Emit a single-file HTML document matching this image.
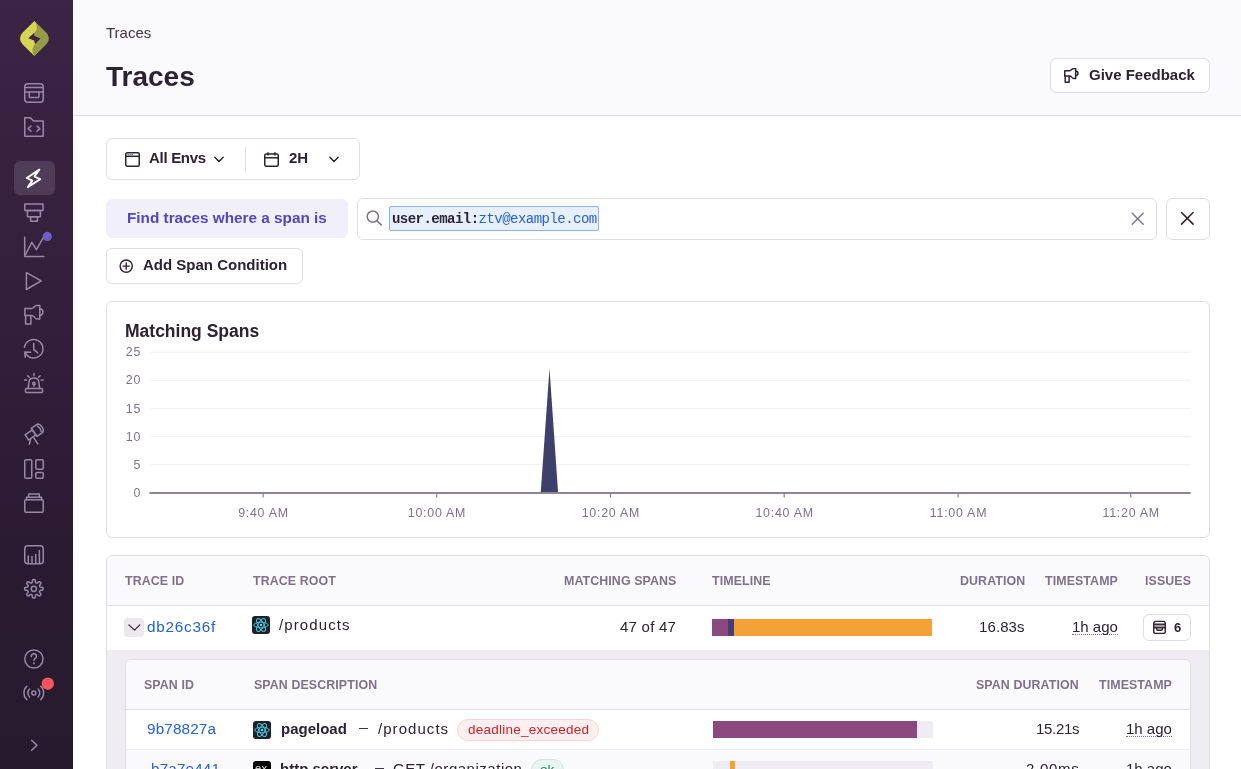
<!DOCTYPE html>
<html><head><meta charset="utf-8">
<style>
*{box-sizing:border-box;margin:0;padding:0}
html,body{width:1241px;height:769px;overflow:hidden;background:#fff;font-family:"Liberation Sans",sans-serif;color:#2b2233}
.abs{position:absolute}
#sb{position:absolute;left:0;top:0;width:73px;height:769px;background:linear-gradient(180deg,#3c2444 0%,#301d38 52%,#291a30 78%,#271a2e 100%)}
#sb svg.ic{position:absolute;left:24px;width:20px;height:20px;fill:none;stroke:#9e8eb0;stroke-width:1.5;stroke-linecap:round;stroke-linejoin:round}
#hdr{position:absolute;left:73px;top:0;width:1168px;height:116px;background:#faf9fb;border-bottom:1px solid #e0dce5}
.t{position:absolute;white-space:nowrap;line-height:1;will-change:transform}
.box{position:absolute;border:1px solid #e0dce5;border-radius:6px;background:#fff}
.th{position:absolute;will-change:transform;white-space:nowrap;line-height:1;font-weight:bold;font-size:12.4px;color:#80708f;letter-spacing:0.1px}
</style></head><body>
<div id="sb">
<svg width="73" height="769" viewBox="0 0 73 769" style="position:absolute;left:0;top:0">
<defs>
<linearGradient id="lg1" x1="0" y1="0" x2="1" y2="0"></linearGradient>
</defs>
<!-- logo -->
<g>
<path d="M34.5 20.9 L22.35 33.05 A7.7 7.7 0 0 0 22.35 43.95 L34.5 56.1 L46.65 43.95 A7.7 7.7 0 0 0 46.65 33.05 Z" fill="#969b47"/>
<path d="M34.5 20.9 L22.35 33.05 A7.7 7.7 0 0 0 22.35 43.95 L34.5 56.1 Q31.8 52 32.5 49 Q33.5 46 35 44 L34.2 32.9 Q37.5 29.5 36.8 26.5 Q36.2 23.5 34.5 20.9 Z" fill="#d7d453"/>
<path d="M34.16 32.86 L34.5 36.1 L40.6 38.6 L35.0 44.0 L34.2 40.6 L28.3 38.2 Z" fill="#3c2444"/>
</g>
<rect x="14" y="161" width="41" height="34" rx="6" fill="#ffffff" fill-opacity="0.12"/>
<g fill="none" stroke="#9888aa" stroke-width="1.5" stroke-linecap="round" stroke-linejoin="round">
<!-- issues -->
<rect x="24.75" y="83.75" width="18.5" height="18.5" rx="3"/>
<line x1="24.75" y1="87.6" x2="43.25" y2="87.6"/>
<line x1="24.75" y1="92.1" x2="43.25" y2="92.1"/>
<path d="M29.2 92.1 V96.4 Q29.2 97.6 30.4 97.6 H37.8 Q39 97.6 39 96.4 V92.1"/>
<!-- folder code -->
<path d="M24.75 136.25 V117.75 H30.5 L33.5 121 H43.25 V136.25 Z"/>
<path d="M31 126 L28.2 128.6 L31 131.2"/>
<path d="M37 126 L39.8 128.6 L37 131.2"/>
<!-- explore stack -->
<rect x="24.8" y="204" width="18.2" height="6.4"/>
<rect x="27.4" y="210.4" width="13" height="6.4"/>
<rect x="30.6" y="216.8" width="6.8" height="4.5"/>
<!-- chart -->
<path d="M24.7 237.3 V256.4 H43.7"/>
<path d="M25.5 254.6 L31.8 242.3 L36.4 249.6 L43.2 237.8"/>
<!-- play -->
<path d="M26.4 272.6 L41.2 280.9 L26.4 289.5 Z"/>
<!-- megaphone -->
<path d="M24.9 308.4 H31.6 Q33 308.4 34.3 306.9 Q35.3 305.5 36.8 305.5 H39.8 V318.9 H36.8 Q35.3 318.9 34.3 317 Q33 315.6 31.6 315.6 H24.9 Z"/>
<path d="M39.8 308.9 A3.2 3.2 0 0 1 39.8 315.3"/>
<path d="M25.6 315.6 V324.1 H30.9 V315.6"/>
<!-- history -->
<path d="M25.2 352.6 A9.3 9.3 0 1 0 24.5 347.2"/>
<path d="M30.6 352.3 L24.9 352.1 L25.1 357.4"/>
<path d="M33.7 343.6 V349.4 L37.8 352.8"/>
<!-- alarm -->
<rect x="25.5" y="388.6" width="17" height="3.9" rx="0.9"/>
<path d="M28.1 388.6 L29 381.8 Q29.5 378 33.9 378 Q38.3 378 38.8 381.8 L39.7 388.6"/>
<circle cx="33.9" cy="383.4" r="1.25"/>
<line x1="33.9" y1="384.6" x2="33.9" y2="386.2"/>
<line x1="33.9" y1="373.5" x2="33.9" y2="375.8"/>
<line x1="27.7" y1="375.8" x2="29.2" y2="377.3"/>
<line x1="40.1" y1="375.8" x2="38.6" y2="377.3"/>
<line x1="24.6" y1="380" x2="26.6" y2="380"/>
<line x1="41.2" y1="380" x2="43.2" y2="380"/>
<!-- telescope -->
<g transform="translate(37.2 430.2) rotate(-35)">
<path d="M-3.8 -5 H2.3 Q5.8 -5 5.8 0 Q5.8 5 2.3 5 H-3.8 Z"/>
<path d="M2.6 -3.2 Q4 0 2.6 3.2"/>
<rect x="-12.6" y="-3.1" width="8.8" height="6.2"/>
</g>
<path d="M30.6 439.3 L29.3 444.2"/>
<path d="M33.8 437.8 L37.8 443.9"/>
<!-- dashboards -->
<rect x="24.75" y="459.75" width="7" height="18.5" rx="1.3"/>
<rect x="35.75" y="459.75" width="7.5" height="9.5" rx="1.3"/>
<rect x="35.75" y="472.5" width="7.5" height="5.75" rx="1.3"/>
<!-- releases -->
<rect x="24.75" y="499.75" width="18.5" height="12.5" rx="1.3"/>
<path d="M26.5 499.75 V497.2 H41.5 V499.75"/>
<path d="M28.7 497.2 V494 H39.3 V497.2"/>
<!-- stats -->
<rect x="24.75" y="545.75" width="18.5" height="18" rx="3"/>
<line x1="28.3" y1="563.5" x2="28.3" y2="556"/>
<line x1="32" y1="563.5" x2="32" y2="556.5"/>
<line x1="35.7" y1="563.5" x2="35.7" y2="554.5"/>
<line x1="39.4" y1="563.5" x2="39.4" y2="550.5"/>
<!-- help -->
<circle cx="33.9" cy="659" r="9.1"/>
<path d="M31.3 656.7 Q31.3 653.8 33.9 653.8 Q36.5 653.8 36.5 656.4 Q36.5 658 34.8 658.8 Q33.9 659.3 33.9 660.6"/>
<circle cx="33.9" cy="663.3" r="0.35" fill="#9888aa"/>
<!-- broadcast -->
<circle cx="33.8" cy="693" r="2"/>
<path d="M29.6 689 A5.5 5.5 0 0 0 29.6 697"/>
<path d="M38 689 A5.5 5.5 0 0 1 38 697"/>
<path d="M26.8 686.2 A9.5 9.5 0 0 0 26.8 699.8"/>
<path d="M40.8 686.2 A9.5 9.5 0 0 1 40.8 699.8"/>
<!-- chevron -->
<path d="M31.6 740.3 L37 745.3 L31.6 750.3"/>
</g>
<!-- gear -->
<g fill="none" stroke="#9888aa" stroke-width="1.5" stroke-linejoin="round">
<path d="M33.84 579.60 L34.02 579.60 L34.20 579.62 L34.38 579.64 L34.56 579.67 L34.73 579.73 L34.90 579.83 L35.06 580.00 L35.19 580.28 L35.29 580.69 L35.35 581.20 L35.40 581.71 L35.44 582.12 L35.51 582.40 L35.60 582.57 L35.70 582.68 L35.80 582.76 L35.91 582.83 L36.02 582.88 L36.14 582.93 L36.25 582.98 L36.37 583.03 L36.48 583.07 L36.60 583.11 L36.72 583.15 L36.85 583.16 L37.00 583.15 L37.19 583.09 L37.43 582.94 L37.75 582.69 L38.15 582.36 L38.55 582.04 L38.91 581.82 L39.20 581.72 L39.43 581.71 L39.62 581.76 L39.78 581.84 L39.94 581.94 L40.08 582.05 L40.22 582.17 L40.35 582.29 L40.47 582.42 L40.59 582.56 L40.70 582.70 L40.80 582.86 L40.88 583.02 L40.93 583.21 L40.92 583.44 L40.82 583.73 L40.60 584.09 L40.28 584.49 L39.95 584.89 L39.70 585.21 L39.55 585.45 L39.49 585.64 L39.48 585.79 L39.49 585.92 L39.53 586.04 L39.57 586.16 L39.61 586.27 L39.66 586.39 L39.71 586.50 L39.76 586.62 L39.81 586.73 L39.88 586.84 L39.96 586.94 L40.07 587.04 L40.24 587.13 L40.52 587.20 L40.93 587.24 L41.44 587.29 L41.95 587.35 L42.36 587.45 L42.64 587.58 L42.81 587.74 L42.91 587.91 L42.97 588.08 L43.00 588.26 L43.02 588.44 L43.04 588.62 L43.04 588.80 L43.04 588.98 L43.02 589.16 L43.00 589.34 L42.97 589.52 L42.91 589.69 L42.81 589.86 L42.64 590.02 L42.36 590.15 L41.95 590.25 L41.44 590.31 L40.93 590.36 L40.52 590.40 L40.24 590.47 L40.07 590.56 L39.96 590.66 L39.88 590.76 L39.81 590.87 L39.76 590.98 L39.71 591.10 L39.66 591.21 L39.61 591.33 L39.57 591.44 L39.53 591.56 L39.49 591.68 L39.48 591.81 L39.49 591.96 L39.55 592.15 L39.70 592.39 L39.95 592.71 L40.28 593.11 L40.60 593.51 L40.82 593.87 L40.92 594.16 L40.93 594.39 L40.88 594.58 L40.80 594.74 L40.70 594.90 L40.59 595.04 L40.47 595.18 L40.35 595.31 L40.22 595.43 L40.08 595.55 L39.94 595.66 L39.78 595.76 L39.62 595.84 L39.43 595.89 L39.20 595.88 L38.91 595.78 L38.55 595.56 L38.15 595.24 L37.75 594.91 L37.43 594.66 L37.19 594.51 L37.00 594.45 L36.85 594.44 L36.72 594.45 L36.60 594.49 L36.48 594.53 L36.37 594.57 L36.25 594.62 L36.14 594.67 L36.02 594.72 L35.91 594.77 L35.80 594.84 L35.70 594.92 L35.60 595.03 L35.51 595.20 L35.44 595.48 L35.40 595.89 L35.35 596.40 L35.29 596.91 L35.19 597.32 L35.06 597.60 L34.90 597.77 L34.73 597.87 L34.56 597.93 L34.38 597.96 L34.20 597.98 L34.02 598.00 L33.84 598.00 L33.66 598.00 L33.48 597.98 L33.30 597.96 L33.12 597.93 L32.95 597.87 L32.78 597.77 L32.62 597.60 L32.49 597.32 L32.39 596.91 L32.33 596.40 L32.28 595.89 L32.24 595.48 L32.17 595.20 L32.08 595.03 L31.98 594.92 L31.88 594.84 L31.77 594.77 L31.66 594.72 L31.54 594.67 L31.43 594.62 L31.31 594.57 L31.20 594.53 L31.08 594.49 L30.96 594.45 L30.83 594.44 L30.68 594.45 L30.49 594.51 L30.25 594.66 L29.93 594.91 L29.53 595.24 L29.13 595.56 L28.77 595.78 L28.48 595.88 L28.25 595.89 L28.06 595.84 L27.90 595.76 L27.74 595.66 L27.60 595.55 L27.46 595.43 L27.33 595.31 L27.21 595.18 L27.09 595.04 L26.98 594.90 L26.88 594.74 L26.80 594.58 L26.75 594.39 L26.76 594.16 L26.86 593.87 L27.08 593.51 L27.40 593.11 L27.73 592.71 L27.98 592.39 L28.13 592.15 L28.19 591.96 L28.20 591.81 L28.19 591.68 L28.15 591.56 L28.11 591.44 L28.07 591.33 L28.02 591.21 L27.97 591.10 L27.92 590.98 L27.87 590.87 L27.80 590.76 L27.72 590.66 L27.61 590.56 L27.44 590.47 L27.16 590.40 L26.75 590.36 L26.24 590.31 L25.73 590.25 L25.32 590.15 L25.04 590.02 L24.87 589.86 L24.77 589.69 L24.71 589.52 L24.68 589.34 L24.66 589.16 L24.64 588.98 L24.64 588.80 L24.64 588.62 L24.66 588.44 L24.68 588.26 L24.71 588.08 L24.77 587.91 L24.87 587.74 L25.04 587.58 L25.32 587.45 L25.73 587.35 L26.24 587.29 L26.75 587.24 L27.16 587.20 L27.44 587.13 L27.61 587.04 L27.72 586.94 L27.80 586.84 L27.87 586.73 L27.92 586.62 L27.97 586.50 L28.02 586.39 L28.07 586.27 L28.11 586.16 L28.15 586.04 L28.19 585.92 L28.20 585.79 L28.19 585.64 L28.13 585.45 L27.98 585.21 L27.73 584.89 L27.40 584.49 L27.08 584.09 L26.86 583.73 L26.76 583.44 L26.75 583.21 L26.80 583.02 L26.88 582.86 L26.98 582.70 L27.09 582.56 L27.21 582.42 L27.33 582.29 L27.46 582.17 L27.60 582.05 L27.74 581.94 L27.90 581.84 L28.06 581.76 L28.25 581.71 L28.48 581.72 L28.77 581.82 L29.13 582.04 L29.53 582.36 L29.93 582.69 L30.25 582.94 L30.49 583.09 L30.68 583.15 L30.83 583.16 L30.96 583.15 L31.08 583.11 L31.20 583.07 L31.31 583.03 L31.43 582.98 L31.54 582.93 L31.66 582.88 L31.77 582.83 L31.88 582.76 L31.98 582.68 L32.08 582.57 L32.17 582.40 L32.24 582.12 L32.28 581.71 L32.33 581.20 L32.39 580.69 L32.49 580.28 L32.62 580.00 L32.78 579.83 L32.95 579.73 L33.12 579.67 L33.30 579.64 L33.48 579.62 L33.66 579.60 Z"/>
<circle cx="33.84" cy="588.8" r="2.6"/>
</g>
<!-- lightning active -->
<path d="M39.3 169.6 L26.8 178 L32.3 180.6 L27.8 187.3 L40.2 179.1 L34.4 176.5 Z" fill="none" stroke="#ffffff" stroke-width="1.9" stroke-linejoin="round"/>
<circle cx="47.3" cy="236.4" r="4.6" fill="#6c5fc7"/>
<circle cx="47.8" cy="683.7" r="6.2" fill="#f55459"/>
</svg>
</div>
<div id="hdr"></div>
<div class="t" style="left:106px;top:25.2px;font-size:15px;color:#3e3446">Traces</div>
<div class="t" style="left:106px;top:63px;font-size:28px;font-weight:bold;color:#2b2233">Traces</div>
<div class="box" style="left:1050px;top:58px;width:160px;height:35px;"></div>
<svg class="abs" style="left:1064px;top:67.7px" width="15" height="15" viewBox="23.9 304.7 20.5 20.5" fill="none" stroke="#2b2233" stroke-width="2.05" stroke-linejoin="round">
<path d="M24.9 308.4 H31.6 Q33 308.4 34.3 306.9 Q35.3 305.5 36.8 305.5 H39.8 V318.9 H36.8 Q35.3 318.9 34.3 317 Q33 315.6 31.6 315.6 H24.9 Z"/><path d="M39.8 308.9 A3.2 3.2 0 0 1 39.8 315.3"/><path d="M25.6 315.6 V324.1 H30.9 V315.6"/>
</svg>
<div class="t" style="left:1088.7px;top:67.3px;font-size:15px;font-weight:bold;color:#2b2233">Give Feedback</div>

<!-- filter bar -->
<div class="box" style="left:106px;top:138px;width:254px;height:42px;"></div>
<div class="abs" style="left:245px;top:147px;width:1px;height:24px;background:#e0dce5"></div>
<svg class="abs" style="left:124px;top:151px" width="17" height="17" viewBox="0 0 17 17" fill="none" stroke="#2b2233" stroke-width="1.5">
<rect x="1.75" y="1.75" width="13.5" height="13.5" rx="1.5"/><line x1="1.75" y1="5.3" x2="15.25" y2="5.3"/>
<g fill="#2b2233" stroke="none"><circle cx="4.1" cy="3.6" r="0.65"/><circle cx="6.1" cy="3.6" r="0.65"/><circle cx="8.1" cy="3.6" r="0.65"/></g>
</svg>
<div class="t" style="left:149.3px;top:149.7px;font-size:15px;font-weight:bold;color:#2b2233;letter-spacing:-0.3px">All Envs</div>
<svg class="abs" style="left:212px;top:154.3px" width="14" height="10" viewBox="0 0 14 10" fill="none" stroke="#2b2233" stroke-width="1.5" stroke-linecap="round" stroke-linejoin="round"><path d="M2.9 3.3 L7 7.5 L11.1 3.3"/></svg>
<svg class="abs" style="left:263px;top:151px" width="17" height="17" viewBox="0 0 17 17" fill="none" stroke="#2b2233" stroke-width="1.5">
<rect x="1.75" y="3" width="13.5" height="12.25" rx="1.5"/><line x1="1.75" y1="6.8" x2="15.25" y2="6.8"/>
<line x1="5" y1="1.2" x2="5" y2="4.5"/><line x1="12" y1="1.2" x2="12" y2="4.5"/>
</svg>
<div class="t" style="left:288.5px;top:149.7px;font-size:15px;font-weight:bold;color:#2b2233">2H</div>
<svg class="abs" style="left:327px;top:154.3px" width="14" height="10" viewBox="0 0 14 10" fill="none" stroke="#2b2233" stroke-width="1.5" stroke-linecap="round" stroke-linejoin="round"><path d="M2.9 3.3 L7 7.5 L11.1 3.3"/></svg>

<div class="abs" style="left:106px;top:199px;width:242px;height:39px;background:#f1eff9;border-radius:6px"></div>
<div class="t" style="left:127.2px;top:209.85px;font-size:15.3px;font-weight:bold;color:#5248ba">Find traces where a span is</div>
<div class="box" style="left:357px;top:198px;width:800px;height:42px;"></div>
<svg class="abs" style="left:365px;top:209px" width="18" height="18" viewBox="0 0 18 18" fill="none" stroke="#80708f" stroke-width="1.5" stroke-linecap="round">
<circle cx="7.8" cy="7.6" r="5.6"/><line x1="11.8" y1="11.6" x2="16.3" y2="16"/>
</svg>
<div class="abs" style="left:389px;top:206px;width:210px;height:25px;background:#e8effc;border:1px solid #8db0ef;border-radius:2px"></div>
<div class="t" style="left:391.7px;top:212.2px;font-family:'Liberation Mono',monospace;font-size:14px;letter-spacing:-0.53px"><b style="color:#2b2233">user.email:</b><span style="color:#2562d4">ztv@example.com</span></div>
<svg class="abs" style="left:1130px;top:211px" width="16" height="16" viewBox="0 0 16 16" fill="none" stroke="#80708f" stroke-width="1.4" stroke-linecap="round">
<line x1="2.2" y1="2.2" x2="13.2" y2="13.2"/><line x1="13.2" y1="2.2" x2="2.2" y2="13.2"/>
</svg>
<div class="box" style="left:1166px;top:198px;width:44px;height:42px;"></div>
<svg class="abs" style="left:1179px;top:210px" width="17" height="17" viewBox="0 0 17 17" fill="none" stroke="#2b2233" stroke-width="1.5" stroke-linecap="round">
<line x1="2.5" y1="2.5" x2="14.1" y2="14.1"/><line x1="14.1" y1="2.5" x2="2.5" y2="14.1"/>
</svg>

<div class="box" style="left:106px;top:248px;width:197px;height:36px;"></div>
<svg class="abs" style="left:118px;top:258px" width="16" height="16" viewBox="0 0 16 16" fill="none" stroke="#2b2233" stroke-width="1.4" stroke-linecap="round">
<circle cx="8.2" cy="8.1" r="6.1"/><line x1="8.2" y1="5" x2="8.2" y2="11.2"/><line x1="5.1" y1="8.1" x2="11.3" y2="8.1"/>
</svg>
<div class="t" style="left:142.9px;top:257.4px;font-size:15px;font-weight:bold;color:#2b2233">Add Span Condition</div>

<!-- chart card -->
<div class="box" style="left:106px;top:301px;width:1104px;height:237px;"></div>
<div class="t" style="left:125px;top:322.5px;font-size:17.5px;font-weight:bold;color:#2b2233">Matching Spans</div>
<svg class="abs" style="left:0;top:0" width="1241" height="769" viewBox="0 0 1241 769">
<g stroke="#f3f1f5" stroke-width="1">
<line x1="150" y1="352.3" x2="1190.6" y2="352.3"/>
<line x1="150" y1="380.4" x2="1190.6" y2="380.4"/>
<line x1="150" y1="408.5" x2="1190.6" y2="408.5"/>
<line x1="150" y1="436.6" x2="1190.6" y2="436.6"/>
<line x1="150" y1="464.7" x2="1190.6" y2="464.7"/>
</g>
<path d="M540.7 493 L549.5 368.4 L558.1 493 Z" fill="#3e3f6b"/>
<line x1="149.4" y1="493" x2="1190.6" y2="493" stroke="#8f849c" stroke-width="1.8"/>
<g stroke="#8a7c9a" stroke-width="1.2">
<line x1="263.1" y1="493" x2="263.1" y2="497.5"/>
<line x1="436.6" y1="493" x2="436.6" y2="497.5"/>
<line x1="610.5" y1="493" x2="610.5" y2="497.5"/>
<line x1="784.2" y1="493" x2="784.2" y2="497.5"/>
<line x1="958.1" y1="493" x2="958.1" y2="497.5"/>
<line x1="1130.8" y1="493" x2="1130.8" y2="497.5"/>
</g>
<g font-family="Liberation Sans" font-size="12.4" fill="#80708f" text-anchor="end" letter-spacing="0.9" transform="translate(0.9,-0.5)">
<text x="140.5" y="356.8">25</text>
<text x="140.5" y="384.9">20</text>
<text x="140.5" y="413">15</text>
<text x="140.5" y="441.1">10</text>
<text x="140.5" y="469.2">5</text>
<text x="140.5" y="497.3">0</text>
</g>
<g font-family="Liberation Sans" font-size="12.4" fill="#80708f" text-anchor="middle" letter-spacing="0.75" transform="translate(0.4,0)">
<text x="263.1" y="517.2">9:40 AM</text>
<text x="436.6" y="517.2">10:00 AM</text>
<text x="610.5" y="517.2">10:20 AM</text>
<text x="784.2" y="517.2">10:40 AM</text>
<text x="958.1" y="517.2">11:00 AM</text>
<text x="1130.8" y="517.2">11:20 AM</text>
</g>
</svg>

<!-- table card -->
<div class="box" style="left:106px;top:555px;width:1104px;height:230px;overflow:hidden;background:#f0ecf3">
  <div class="abs" style="left:0;top:0;width:1102px;height:50px;background:#faf9fb;border-bottom:1px solid #e0dce5"></div>
  <div class="abs" style="left:0;top:50px;width:1102px;height:44px;background:#fff;"></div>
</div>
<div class="th" style="left:125.1px;top:574.6px">TRACE ID</div>
<div class="th" style="left:253px;top:574.6px">TRACE ROOT</div>
<div class="th" style="right:564.7px;top:574.6px">MATCHING SPANS</div>
<div class="th" style="left:712.1px;top:574.6px">TIMELINE</div>
<div class="th" style="right:216.1px;top:574.6px">DURATION</div>
<div class="th" style="right:122.7px;top:574.6px">TIMESTAMP</div>
<div class="th" style="right:50px;top:574.6px">ISSUES</div>

<div class="abs" style="left:124px;top:618px;width:20px;height:19px;background:#ebe8ee;border-radius:4px"></div>
<svg class="abs" style="left:127px;top:620px" width="14" height="14" viewBox="0 0 14 14" fill="none" stroke="#2b2233" stroke-width="1.15" stroke-linecap="round" stroke-linejoin="round"><path d="M1.9 4.8 L7.5 10.1 L12.8 4.8"/></svg>
<div class="t" style="left:147.1px;top:619.1px;font-size:15.3px;color:#2562d4;letter-spacing:0.75px">db26c36f</div>
<svg class="abs react" style="left:252px;top:616px" width="18" height="18" viewBox="0 0 18 18">
<rect width="18" height="18" rx="3" fill="#1d2227"/>
<g fill="none" stroke="#4fc2e3" stroke-width="0.95"><ellipse cx="9" cy="9" rx="7.2" ry="2.8"/><ellipse cx="9" cy="9" rx="7.2" ry="2.8" transform="rotate(60 9 9)"/><ellipse cx="9" cy="9" rx="7.2" ry="2.8" transform="rotate(120 9 9)"/></g>
<circle cx="9" cy="9" r="1.3" fill="#5fd3f3"/>
</svg>
<div class="t" style="left:279.2px;top:616.8px;font-size:15px;color:#2b2233;letter-spacing:1.1px">/products</div>
<div class="t" style="right:564.9px;top:619.1px;font-size:15px;color:#2b2233;letter-spacing:0.25px">47 of 47</div>
<div class="abs" style="left:712px;top:619px;width:220px;height:17px;background:#f4a236"></div>
<div class="abs" style="left:712px;top:619px;width:16px;height:17px;background:#8b4a7f"></div>
<div class="abs" style="left:728px;top:619px;width:6px;height:17px;background:#453f72"></div>
<div class="t" style="right:216.3px;top:618.8px;font-size:15px;color:#2b2233;letter-spacing:0.1px">16.83s</div>
<div class="t" style="right:122.7px;top:619.3px;font-size:15px;color:#2b2233;border-bottom:1px dotted #80708f;padding-bottom:0px">1h ago</div>
<div class="box" style="left:1143px;top:614px;width:48px;height:27px"></div>
<svg class="abs" style="left:1152px;top:620px" width="15" height="15" viewBox="0 0 15 15" fill="none" stroke="#2b2233" stroke-width="1.4" stroke-linejoin="round">
<rect x="1.75" y="4.2" width="11.5" height="3.6" fill="#2b2233" fill-opacity="0.45" stroke="none"/><rect x="1.75" y="1.4" width="11.5" height="12" rx="2"/><line x1="1.75" y1="4.2" x2="13.25" y2="4.2"/><line x1="1.75" y1="7.8" x2="13.25" y2="7.8"/>
<path d="M4.8 7.8 V9.6 Q4.8 10.3 5.5 10.3 H9.5 Q10.2 10.3 10.2 9.6 V7.8"/>
</svg>
<div class="t" style="left:1173.5px;top:621px;font-size:13px;font-weight:bold;color:#2b2233">6</div>

<!-- nested span table -->
<div class="abs" style="left:125px;top:659px;width:1066px;height:130px;background:#fff;border:1px solid #e0dce5;border-radius:6px;overflow:hidden">
  <div class="abs" style="left:0;top:0;width:1064px;height:50px;background:#faf9fb;border-bottom:1px solid #e0dce5"></div>
  <div class="abs" style="left:0;top:89px;width:1064px;height:1px;background:#f0ecf3"></div>
  <div class="abs" style="left:0;top:90px;width:1064px;height:60px;background:#faf9fb"></div>
</div>
<div class="th" style="left:143.5px;top:678.6px">SPAN ID</div>
<div class="th" style="left:253.6px;top:678.6px">SPAN DESCRIPTION</div>
<div class="th" style="right:162.5px;top:678.6px">SPAN DURATION</div>
<div class="th" style="right:68.7px;top:678.6px">TIMESTAMP</div>

<div class="t" style="left:147.1px;top:721px;font-size:15.3px;color:#2562d4;letter-spacing:0.12px">9b78827a</div>
<svg class="abs" style="left:253px;top:720.5px" width="18" height="18" viewBox="0 0 18 18">
<rect width="18" height="18" rx="3" fill="#1d2227"/>
<g fill="none" stroke="#4fc2e3" stroke-width="0.95"><ellipse cx="9" cy="9" rx="7.2" ry="2.8"/><ellipse cx="9" cy="9" rx="7.2" ry="2.8" transform="rotate(60 9 9)"/><ellipse cx="9" cy="9" rx="7.2" ry="2.8" transform="rotate(120 9 9)"/></g>
<circle cx="9" cy="9" r="1.3" fill="#5fd3f3"/>
</svg>
<div class="t" style="left:280.7px;top:721px;font-size:15px;font-weight:bold;color:#2b2233">pageload</div>
<div class="abs" style="left:358.6px;top:728.2px;width:9.7px;height:1.2px;background:#3e3446"></div>
<div class="t" style="left:378px;top:721px;font-size:15px;color:#2b2233;letter-spacing:1.05px">/products</div>
<div class="abs" style="left:457px;top:719px;width:142px;height:22px;background:#fdeef0;border:1px solid #fbd3d6;border-radius:11px"></div>
<div class="t" style="left:467.7px;top:722.5px;font-size:13.5px;color:#cf2126;letter-spacing:0.25px">deadline_exceeded</div>
<div class="abs" style="left:713px;top:721px;width:220px;height:17px;background:#f0ecf3"></div>
<div class="abs" style="left:713px;top:721px;width:204px;height:17px;background:#8b4a7f"></div>
<div class="t" style="right:162.1px;top:721px;font-size:15px;color:#2b2233;letter-spacing:-0.3px">15.21s</div>
<div class="t" style="right:68.7px;top:721px;font-size:15px;color:#2b2233;border-bottom:1px dotted #80708f">1h ago</div>

<div class="t" style="left:150.9px;top:761px;font-size:15.3px;color:#2562d4;letter-spacing:0.12px">b7a7e441</div>
<div class="abs" style="left:253px;top:761px;width:18px;height:18px;background:#000;border-radius:3px;box-shadow:0 0 0 1px #fff"></div>
<div class="t" style="left:254.8px;top:763.3px;font-size:11px;color:#e8e8e8;letter-spacing:0.3px">ex</div>
<div class="t" style="left:279.9px;top:761px;font-size:15px;font-weight:bold;color:#2b2233">http.server</div>
<div class="abs" style="left:374.8px;top:768.2px;width:9.7px;height:1.2px;background:#3e3446"></div>
<div class="t" style="left:393.2px;top:761px;font-size:15px;color:#2b2233;letter-spacing:0.52px">GET /organization</div>
<div class="abs" style="left:530.5px;top:759px;width:33px;height:22px;background:#e9f4f0;border:1px solid #cde8df;border-radius:11px"></div>
<div class="t" style="left:540px;top:762.5px;font-size:13.5px;color:#207964">ok</div>
<div class="abs" style="left:713px;top:761px;width:220px;height:17px;background:#f0ecf3"></div>
<div class="abs" style="left:729.6px;top:761px;width:5.3px;height:17px;background:#f4a236"></div>
<div class="t" style="right:161.5px;top:760.5px;font-size:15px;color:#2b2233;letter-spacing:0.7px">2.00ms</div>
<div class="t" style="right:68.7px;top:761px;font-size:15px;color:#2b2233">1h ago</div>
</body></html>
